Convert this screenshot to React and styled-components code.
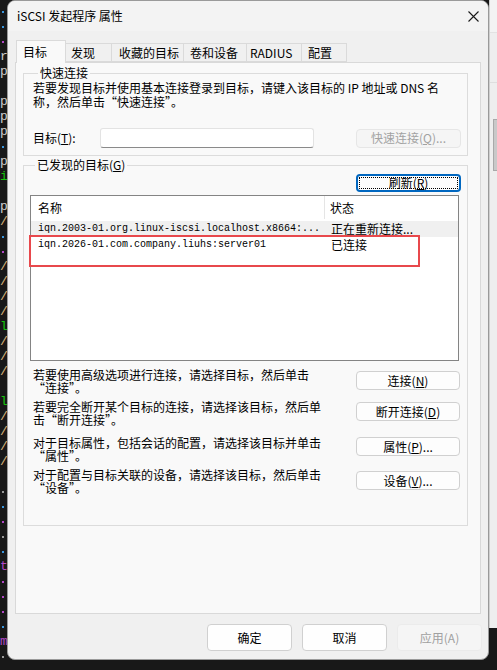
import React from 'react';
import styled, { createGlobalStyle } from 'styled-components';

const UI = `"Noto Sans CJK SC", "Noto Sans", sans-serif`;
const MONO = `"Liberation Mono", "DejaVu Sans Mono", monospace`;

const Global = createGlobalStyle`
  html, body { margin: 0; padding: 0; background: #181818; }
  #root { width: 497px; height: 670px; overflow: hidden; }
  * { box-sizing: border-box; }
`;

const Desktop = styled.div`
  display: flex;
  align-items: flex-start;
  width: 497px;
  height: 670px;
  background: #181818;
  overflow: hidden;
`;

/* terminal behind, left edge */
const Terminal = styled.div`
  width: 7px;
  flex-shrink: 0;
  padding-top: 4px;
  overflow: hidden;
  font-family: ${MONO};
  font-size: 13px;
  line-height: 15px;
`;
const TermLine = styled.div`
  height: 15px;
  display: flex;
  align-items: center;
  color: ${(p) => p.$c};
  white-space: pre;
`;
const TermDot = styled.span`
  width: 2px;
  height: 2px;
  margin-left: 2px;
  background: ${(p) => p.$c};
`;

/* window behind, right edge */
const BackWindow = styled.div`
  width: 8px;
  height: 628px;
  flex-shrink: 0;
  display: flex;
  flex-direction: column;
  background: #eeeeee;
  border-left: 1px solid #cfcfcf;
`;
const BackTop = styled.div`
  height: 33px;
  background: #f3f3f3;
  border-bottom: 1px solid #e2e2e2;
`;
const BackBand = styled.div`
  height: 50px;
  border-bottom: 1px solid #dedede;
`;
const BackThumb = styled.div`
  margin: 36px 0 0 3px;
  width: 5px;
  height: 52px;
  background: #c9c9c9;
  border: 1px solid #a9a9a9;
  border-right: none;
`;

const Window = styled.div`
  width: 482px;
  height: 660px;
  flex-shrink: 0;
  display: flex;
  flex-direction: column;
  background: #f0f0f0;
  border: 1px solid #9a9a9a;
  border-radius: 8px;
  overflow: hidden;
  font-family: ${UI};
  font-size: 12px;
  color: #000;
`;
const TitleBar = styled.div`
  height: 30px;
  flex-shrink: 0;
  display: flex;
  align-items: center;
  justify-content: space-between;
  padding: 0 9px 0 9px;
  background: #f3f3f3;
`;
const Title = styled.span`
  font-size: 12px;
  line-height: 16px;
`;
const Body = styled.div`
  flex: 1;
  display: flex;
  flex-direction: column;
  padding: 9px 7px 8px 7px;
`;
const Tabs = styled.div`
  display: flex;
  align-items: flex-end;
  height: 22px;
  margin-left: 1px;
  position: relative;
  z-index: 1;
`;
const Tab = styled.div`
  width: ${(p) => p.$w}px;
  height: ${(p) => (p.$active ? 23 : 19)}px;
  margin-bottom: ${(p) => (p.$active ? -1 : 0)}px;
  padding-left: ${(p) => p.$pl}px;
  display: flex;
  align-items: center;
  background: ${(p) => (p.$active ? '#f9f9f9' : '#f0f0f0')};
  border: 1px solid #dadada;
  border-bottom: ${(p) => (p.$active ? 'none' : '1px solid #dadada')};
  border-left: ${(p) => (p.$first ? '1px solid #dadada' : 'none')};
  line-height: 16px;
  white-space: nowrap;
`;
const Panel = styled.div`
  height: 552px;
  border: 1px solid #d9d9d9;
  background: #f9f9f9;
  padding: 3px 0 0 7px;
  display: flex;
  flex-direction: column;
`;
const GroupBox = styled.fieldset`
  margin: ${(p) => p.$mt}px 0 0 0;
  width: 445px;
  height: ${(p) => (p.$h ? `${p.$h}px` : 'auto')};
  border: 1px solid #dcdcdc;
  padding: 0 6px ${(p) => p.$pb}px ${(p) => p.$pl}px;
  display: flex;
  flex-direction: column;
  min-width: 0;
`;
const Legend = styled.legend`
  margin-left: 5px;
  padding: 0 2px;
  line-height: 14px;
  font-size: 12px;
`;
const Para = styled.div`
  margin-top: ${(p) => p.$mt || 0}px;
  margin-left: ${(p) => p.$ml || 0}px;
  display: flex;
  flex-direction: column;
  white-space: nowrap;
`;
const Line = styled.div`
  height: ${(p) => p.$lh}px;
  line-height: ${(p) => p.$lh}px;
`;
const QuickRow = styled.div`
  display: flex;
  align-items: center;
  margin-top: 19px;
  height: 20px;
`;
const FieldLabel = styled.span`
  width: 67px;
  line-height: 16px;
`;
const Input = styled.div`
  width: 214px;
  height: 20px;
  background: #ffffff;
  border: 1px solid #e3e3e3;
  border-bottom: 1px solid #8a8a8a;
  border-radius: 3px;
`;
const Btn = styled.div`
  width: ${(p) => p.$w}px;
  height: ${(p) => p.$h}px;
  margin-left: auto;
  margin-top: ${(p) => p.$mt || 0}px;
  margin-right: ${(p) => p.$mr || 0}px;
  flex-shrink: 0;
  display: flex;
  align-items: center;
  justify-content: center;
  font-size: 12px;
  line-height: 16px;
  white-space: nowrap;
  border-radius: 4px;
  color: ${(p) => (p.$disabled ? '#a2a2a2' : '#000')};
  background: ${(p) => (p.$disabled ? '#f5f5f5' : '#fdfdfd')};
  border: ${(p) =>
    p.$focus ? '2px solid #0067c0' : p.$disabled ? '1px solid #e6e6e6' : '1px solid #d0d0d0'};
  outline: ${(p) => (p.$focus ? '1px dotted #000' : 'none')};
  outline-offset: -4px;
`;
const RefreshRow = styled.div`
  display: flex;
  margin-top: 2px;
`;
const ListView = styled.div`
  position: relative;
  width: 429px;
  height: 166px;
  margin-top: 3px;
  border: 1px solid #848484;
  background: #ffffff;
`;
const ListHeader = styled.div`
  display: flex;
  height: 25px;
  align-items: stretch;
`;
const HeadCell = styled.div`
  width: ${(p) => (p.$w ? `${p.$w}px` : 'auto')};
  flex: ${(p) => (p.$w ? 'none' : 1)};
  padding-left: ${(p) => p.$pl}px;
  display: flex;
  align-items: center;
  border-right: ${(p) => (p.$divider ? '1px solid #e5e5e5' : 'none')};
  margin-bottom: 2px;
  line-height: 16px;
`;
const ListRow = styled.div`
  display: flex;
  height: 16px;
  align-items: center;
  background: ${(p) => (p.$shade ? '#f0f0f0' : '#ffffff')};
`;
const NameCell = styled.div`
  width: 294px;
  padding-left: 7px;
  font-family: ${MONO};
  font-size: 10px;
  line-height: 14px;
  white-space: nowrap;
  overflow: hidden;
`;
const StatusCell = styled.div`
  flex: 1;
  padding-left: 6px;
  line-height: 14px;
  white-space: nowrap;
`;
const Highlight = styled.div`
  position: absolute;
  left: -2px;
  top: 39px;
  width: 391px;
  height: 32px;
  border: 2px solid #e8484c;
  pointer-events: none;
`;
const ActionRow = styled.div`
  display: flex;
  align-items: flex-start;
  margin-top: ${(p) => p.$mt}px;
`;
const Footer = styled.div`
  display: flex;
  justify-content: flex-end;
  gap: 10px;
  margin-top: 10px;
  margin-right: -1px;
`;
const DlgBtn = styled.div`
  width: 85px;
  height: 27px;
  display: flex;
  align-items: center;
  justify-content: center;
  border-radius: 4px;
  font-size: 12px;
  color: ${(p) => (p.$disabled ? '#a0a0a0' : '#000')};
  background: ${(p) => (p.$disabled ? '#f5f5f5' : '#fefefe')};
  border: 1px solid ${(p) => (p.$disabled ? '#ebebeb' : '#d0d0d0')};
`;

const CloseIcon = () => (
  <svg width="11" height="11" viewBox="0 0 11 11">
    <path d="M0.5 0.5 L10.5 10.5 M10.5 0.5 L0.5 10.5" stroke="#1a1a1a" strokeWidth="1.1" fill="none" />
  </svg>
);

const BLUE = '#3a96dd';
const MAG = '#b148c6';
const GRN = '#16c60c';
const FG = '#cccccc';
const TAN = '#d6b37a';
const GRAY = '#999';
const termLines = [
  ['dot', BLUE], ['dot', BLUE], ['dot', MAG], ['r', FG], ['p', FG], ['', FG],
  ['p', FG], ['p', FG], ['p', FG], ['dot', BLUE], ['p', FG], ['i', GRN], ['', FG],
  ['p', FG], ['/', TAN], ['dot', BLUE], ['dot', MAG], ['/', TAN], ['/', TAN], ['/', TAN],
  ['/', TAN], ['l', GRN], ['/', TAN], ['/', TAN], ['/', TAN], ['', FG], ['l', GRN],
  ['/', TAN], ['/', TAN], ['/', TAN], ['/', TAN], ['', FG], ['dot', GRAY], ['dot', BLUE],
  ['dot', MAG], ['dot', GRAY], ['dot', BLUE], ['t', MAG], ['dot', MAG], ['dot', MAG],
  ['dot', MAG], ['dot', BLUE], ['m', MAG], ['dot', GRAY],
];

const tabs = [
  { label: '目标', w: 50, pl: 6, active: true },
  { label: '发现', w: 46, pl: 5 },
  { label: '收藏的目标', w: 72, pl: 7 },
  { label: '卷和设备', w: 63, pl: 6 },
  { label: 'RADIUS', w: 55, pl: 3 },
  { label: '配置', w: 45, pl: 6 },
];

const actions = [
  { l1: '若要使用高级选项进行连接，请选择目标，然后单击', l2: '“连接”。', btn: <>连接(<u>N</u>)</>, mt: 7, bmt: 3 },
  { l1: '若要完全断开某个目标的连接，请选择该目标，然后单', l2: '击“断开连接”。', btn: <>断开连接(<u>D</u>)</>, mt: 6, bmt: 2 },
  { l1: '对于目标属性，包括会话的配置，请选择该目标并单击', l2: '“属性”。', btn: <>属性(<u>P</u>)...</>, mt: 10, bmt: 1 },
  { l1: '对于配置与目标关联的设备，请选择该目标，然后单击', l2: '“设备”。', btn: <>设备(<u>V</u>)...</>, mt: 6, bmt: 3 },
];

export default function App() {
  return (
    <>
      <Global />
      <Desktop lang="zh-CN">
        <Terminal>
          {termLines.map(([ch, c], i) => (
            <TermLine key={i} $c={c}>
              {ch === 'dot' ? <TermDot $c={c} /> : ch}
            </TermLine>
          ))}
        </Terminal>
        <Window>
          <TitleBar>
            <Title>iSCSI 发起程序 属性</Title>
            <CloseIcon />
          </TitleBar>
          <Body>
            <Tabs>
              {tabs.map((t, i) => (
                <Tab key={t.label} $w={t.w} $pl={t.pl} $active={t.active} $first={i === 0}>
                  {t.label}
                </Tab>
              ))}
            </Tabs>
            <Panel>
              <GroupBox $mt={0} $pb={7} $pl={9}>
                <Legend>快速连接</Legend>
                <Para $mt={1}>
                  <Line $lh={14}>若要发现目标并使用基本连接登录到目标，请键入该目标的 IP 地址或 DNS 名</Line>
                  <Line $lh={14}>称，然后单击“快速连接”。</Line>
                </Para>
                <QuickRow>
                  <FieldLabel>目标(<u>T</u>):</FieldLabel>
                  <Input />
                  <Btn $w={105} $h={19} $disabled>
                    快速连接(<u>Q</u>)...
                  </Btn>
                </QuickRow>
              </GroupBox>
              <GroupBox $mt={2} $pb={0} $pl={6} $h={368}>
                <Legend>已发现的目标(<u>G</u>)</Legend>
                <RefreshRow>
                  <Btn $w={105} $h={18} $focus>
                    刷新(<u>R</u>)
                  </Btn>
                </RefreshRow>
                <ListView>
                  <ListHeader>
                    <HeadCell $w={294} $pl={7} $divider>名称</HeadCell>
                    <HeadCell $pl={5}>状态</HeadCell>
                  </ListHeader>
                  <ListRow $shade>
                    <NameCell>iqn.2003-01.org.linux-iscsi.localhost.x8664:...</NameCell>
                    <StatusCell>正在重新连接...</StatusCell>
                  </ListRow>
                  <ListRow>
                    <NameCell>iqn.2026-01.com.company.liuhs:server01</NameCell>
                    <StatusCell>已连接</StatusCell>
                  </ListRow>
                  <Highlight />
                </ListView>
                {actions.map((a, i) => (
                  <ActionRow key={i} $mt={a.mt}>
                    <Para $ml={3}>
                      <Line $lh={13}>{a.l1}</Line>
                      <Line $lh={13}>{a.l2}</Line>
                    </Para>
                    <Btn $w={104} $h={19} $mt={a.bmt} $mr={1}>
                      {a.btn}
                    </Btn>
                  </ActionRow>
                ))}
              </GroupBox>
            </Panel>
            <Footer>
              <DlgBtn>确定</DlgBtn>
              <DlgBtn>取消</DlgBtn>
              <DlgBtn $disabled>应用(A)</DlgBtn>
            </Footer>
          </Body>
        </Window>
        <BackWindow>
          <BackTop />
          <BackBand />
          <BackThumb />
        </BackWindow>
      </Desktop>
    </>
  );
}
